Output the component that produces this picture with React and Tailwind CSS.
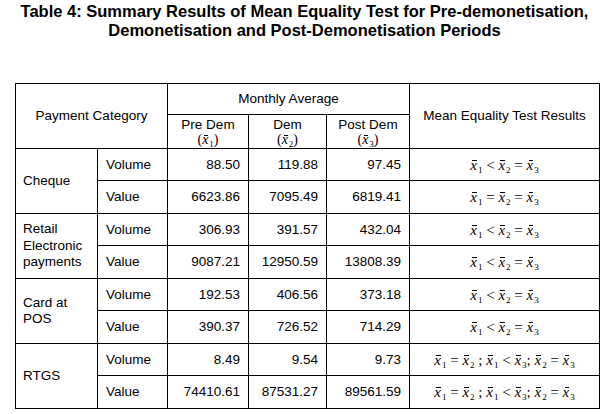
import React from 'react';

const X = ({ n }) => (
    <span className="whitespace-nowrap">
        <span className="relative inline-block italic">
            x
            <span className="absolute left-[2px] right-[0px] top-[3px] h-px bg-black" />
        </span>
        <sub className="text-[9px] not-italic relative top-[3px] ml-[1px]">{n}</sub>
    </span>
);

const Result = ({ kind }) => {
    if (kind === 'lt')
        return (
            <span>
                <X n="1" /> &lt; <X n="2" /> = <X n="3" />
            </span>
        );
    if (kind === 'eq')
        return (
            <span>
                <X n="1" /> = <X n="2" /> = <X n="3" />
            </span>
        );
    return (
        <span>
            <X n="1" /> = <X n="2" /> ; <X n="1" /> &lt; <X n="3" />; <X n="2" /> = <X n="3" />
        </span>
    );
};

const groups = [
    {
        name: ['Cheque'],
        rows: [
            ['Volume', '88.50', '119.88', '97.45', 'lt'],
            ['Value', '6623.86', '7095.49', '6819.41', 'eq'],
        ],
    },
    {
        name: ['Retail', 'Electronic', 'payments'],
        rows: [
            ['Volume', '306.93', '391.57', '432.04', 'lt'],
            ['Value', '9087.21', '12950.59', '13808.39', 'lt'],
        ],
    },
    {
        name: ['Card at', 'POS'],
        rows: [
            ['Volume', '192.53', '406.56', '373.18', 'lt'],
            ['Value', '390.37', '726.52', '714.29', 'lt'],
        ],
    },
    {
        name: ['RTGS'],
        rows: [
            ['Volume', '8.49', '9.54', '9.73', 'mix'],
            ['Value', '74410.61', '87531.27', '89561.59', 'mix'],
        ],
    },
];

const cell = 'border border-black px-[7px] align-middle';

export default function App() {
    return (
        <div className="w-[609px] h-[414px] bg-white text-black font-['Liberation_Sans',Arial,sans-serif]">
            {/* Title */}
            <div className="pt-[2px] text-center font-bold text-[16.5px] leading-[19px]">
                <p>Table 4: Summary Results of Mean Equality Test for Pre-demonetisation,</p>
                <p>Demonetisation and Post-Demonetisation Periods</p>
            </div>

            <div className="mt-[43px] pl-[15px]">
                <table className="border-collapse table-fixed w-[584px] text-[13.5px] leading-[16px]">
                    <colgroup>
                        <col className="w-[82px]" />
                        <col className="w-[70px]" />
                        <col className="w-[81px]" />
                        <col className="w-[78px]" />
                        <col className="w-[83px]" />
                        <col className="w-[190px]" />
                    </colgroup>
                    <thead>
                        <tr className="h-[31px]">
                            <th rowSpan={2} colSpan={2} className={`${cell} font-normal text-center`}>
                                Payment Category
                            </th>
                            <th colSpan={3} className={`${cell} font-normal text-center`}>
                                Monthly Average
                            </th>
                            <th rowSpan={2} className={`${cell} font-normal text-center`}>
                                Mean Equality Test Results
                            </th>
                        </tr>
                        <tr className="h-[34px]">
                            {[['Pre Dem', '1'], ['Dem', '2'], ['Post Dem', '3']].map(([t, n]) => (
                                <th key={t} className={`${cell} font-normal text-center leading-[15px]`}>
                                    <div>{t}</div>
                                    <div className="font-['Liberation_Serif',serif] text-[14px]">
                                        (<X n={n} />)
                                    </div>
                                </th>
                            ))}
                        </tr>
                    </thead>
                    <tbody>
                        {groups.map((g) =>
                            g.rows.map((r, i) => (
                                <tr key={g.name[0] + r[0]} className={i === 0 ? 'h-[32px]' : 'h-[33px]'}>
                                    {i === 0 && (
                                        <td rowSpan={2} className={`${cell} leading-[16.5px]`}>
                                            {g.name.map((l) => (
                                                <div key={l}>{l}</div>
                                            ))}
                                        </td>
                                    )}
                                    <td className={`${cell} pl-[8px]`}>{r[0]}</td>
                                    <td className={`${cell} text-right pr-[8px]`}>{r[1]}</td>
                                    <td className={`${cell} text-right pr-[8px]`}>{r[2]}</td>
                                    <td className={`${cell} text-right pr-[8px]`}>{r[3]}</td>
                                    <td className={`${cell} text-center font-['Liberation_Serif',serif] text-[15px]`}>
                                        <Result kind={r[4]} />
                                    </td>
                                </tr>
                            ))
                        )}
                    </tbody>
                </table>
            </div>
        </div>
    );
}
